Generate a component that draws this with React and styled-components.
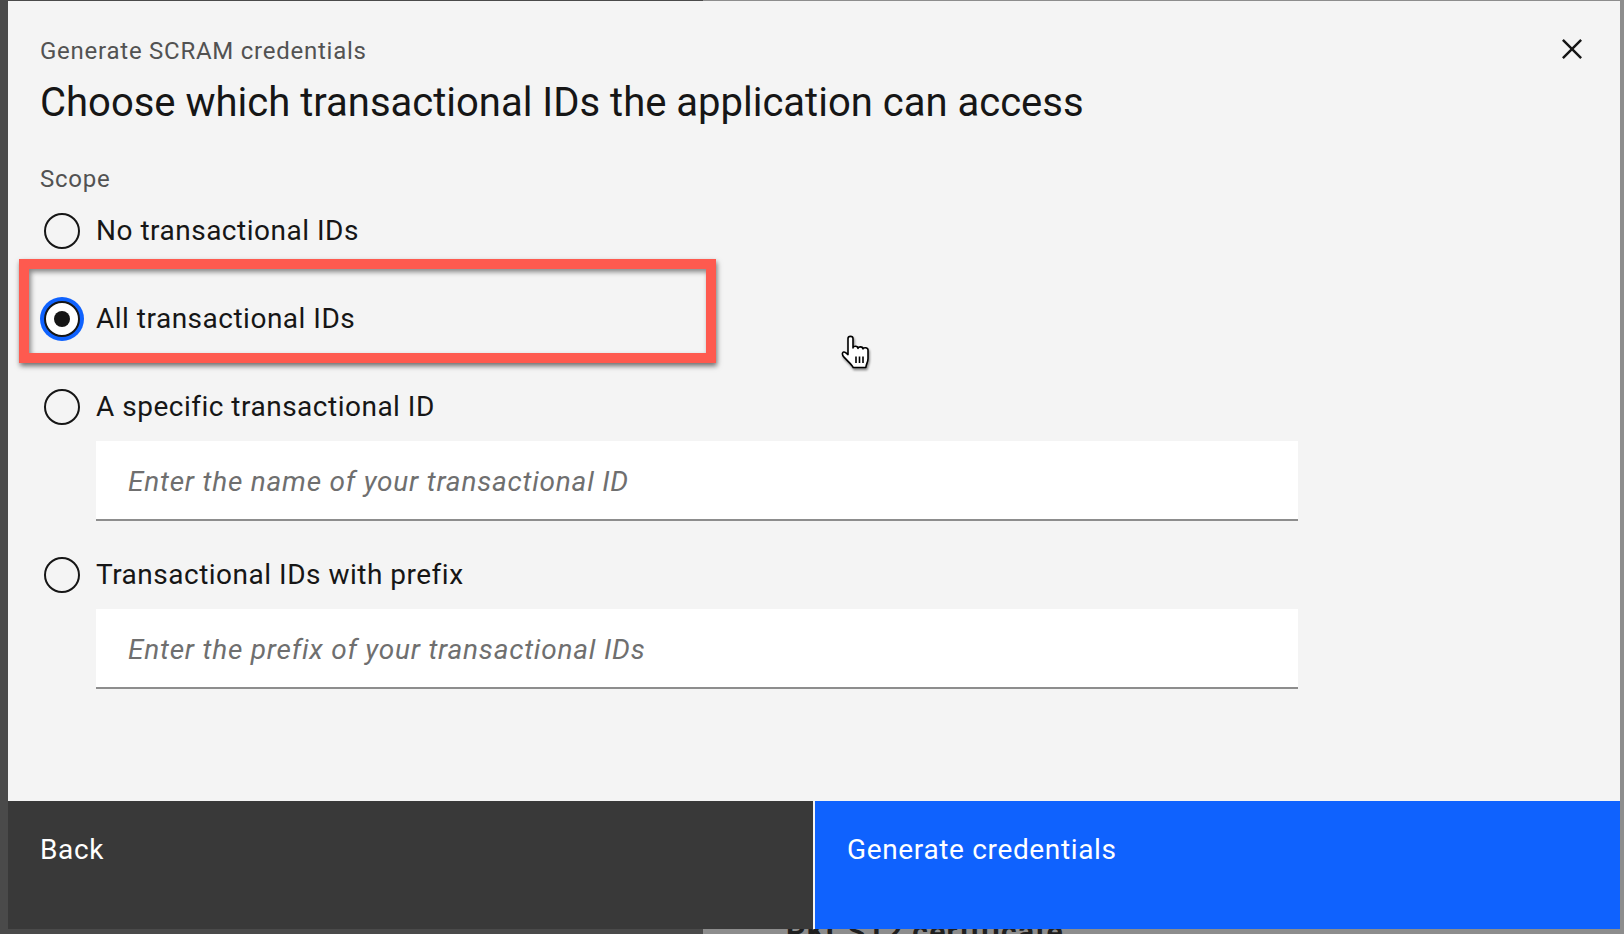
import React from "react";
import styled, { createGlobalStyle } from "styled-components";

const GlobalStyle = createGlobalStyle`
  html, body {
    margin: 0;
    padding: 0;
  }
  body {
    font-family: Roboto, "Liberation Sans", sans-serif;
  }
  * {
    box-sizing: border-box;
  }
`;

const Page = styled.div`
  position: relative;
  width: 1624px;
  height: 934px;
  overflow: hidden;
  display: flex;
  padding: 1px 4px 5px 8px;
  background: linear-gradient(to right, #4a4a4a 0 703px, #8d8d8d 703px);
`;

// bit of the page under the overlay that peeks out below the footer
const BehindText = styled.div`
  position: absolute;
  left: 786px;
  top: 917px;
  font-size: 30px;
  line-height: 30px;
  font-weight: 700;
  letter-spacing: 1.2px;
  color: #1f1f1f;
  white-space: nowrap;
`;

const Modal = styled.div`
  position: relative;
  z-index: 1;
  flex: 1;
  display: flex;
  flex-direction: column;
  background: #f4f4f4;
`;

const Header = styled.header`
  padding: 34px 32px 0;
`;

const Label = styled.p`
  margin: 0;
  font-size: 24px;
  line-height: 32px;
  letter-spacing: 0.75px;
  color: #525252;
`;

const Title = styled.h2`
  margin: 10px 0 0;
  font-size: 40px;
  line-height: 52px;
  font-weight: 400;
  letter-spacing: 0;
  color: #161616;
`;

const CloseButton = styled.button`
  position: absolute;
  top: 0;
  right: 0;
  width: 96px;
  height: 96px;
  padding: 0;
  border: 0;
  background: transparent;
  display: flex;
  align-items: center;
  justify-content: center;
  cursor: pointer;
  color: #161616;
`;

const Body = styled.div`
  flex: 1;
  margin-top: 34px;
  padding: 0 32px;
`;

const Options = styled.div`
  margin-top: 18px;
  display: flex;
  flex-direction: column;
  gap: 36px;
`;

const Option = styled.div`
  display: flex;
  flex-direction: column;
  gap: 16px;
  margin-bottom: ${(p) => (p.$plain ? "16px" : "0")};
`;

const RadioRow = styled.label`
  display: flex;
  align-items: center;
  gap: 16px;
  height: 36px;
  font-size: 28px;
  line-height: 36px;
  letter-spacing: 0.5px;
  color: #161616;
  cursor: pointer;
`;

const Circle = styled.span`
  flex: none;
  width: 36px;
  height: 36px;
  margin-left: 4px;
  border-radius: 50%;
  border: 2px solid #161616;
  display: flex;
  align-items: center;
  justify-content: center;
  background: ${(p) => (p.$checked ? "#ffffff" : "transparent")};
  box-shadow: ${(p) => (p.$checked ? "0 0 0 4px #0f62fe" : "none")};

  &::after {
    content: "";
    width: 16px;
    height: 16px;
    border-radius: 50%;
    background: #161616;
    display: ${(p) => (p.$checked ? "block" : "none")};
  }
`;

const TextInput = styled.input`
  margin-left: 56px;
  width: 1202px;
  height: 80px;
  padding: 2px 32px 0;
  border: 0;
  border-bottom: 2px solid #8d8d8d;
  background: #ffffff;
  outline: none;
  font-family: inherit;
  font-size: 28px;
  letter-spacing: 0.78px;
  color: #161616;

  &::placeholder {
    font-style: italic;
    color: #6f6f6f;
  }
`;

const Footer = styled.footer`
  display: grid;
  grid-template-columns: 1fr 1fr;
  gap: 2px;
  height: 128px;
`;

const FooterButton = styled.button`
  border: 0;
  margin: 0;
  padding: 31px 32px;
  text-align: left;
  display: flex;
  align-items: flex-start;
  font-family: inherit;
  font-size: 28px;
  line-height: 36px;
  letter-spacing: 0.65px;
  color: #ffffff;
  background: ${(p) => (p.$primary ? "#0f62fe" : "#393939")};
  cursor: pointer;
`;

// annotation drawn over the screenshot
const Highlight = styled.div`
  position: absolute;
  z-index: 2;
  left: 19px;
  top: 259px;
  width: 697px;
  height: 104px;
  border: 10px solid #fe5a4f;
  box-shadow: 1px 3px 5px rgba(0, 0, 0, 0.55),
    inset 2px 3px 5px rgba(0, 0, 0, 0.45);
  pointer-events: none;
`;

const Pointer = styled.svg`
  position: absolute;
  z-index: 3;
  left: 838px;
  top: 332px;
  filter: drop-shadow(1px 2px 1px rgba(0, 0, 0, 0.45));
  pointer-events: none;
`;

const options = [
  { id: "none", text: "No transactional IDs" },
  { id: "all", text: "All transactional IDs" },
  {
    id: "specific",
    text: "A specific transactional ID",
    placeholder: "Enter the name of your transactional ID",
  },
  {
    id: "prefix",
    text: "Transactional IDs with prefix",
    placeholder: "Enter the prefix of your transactional IDs",
  },
];

const CloseIcon = () => (
  <svg width="40" height="40" viewBox="0 0 32 32" fill="currentColor">
    <path d="M24 9.4L22.6 8 16 14.6 9.4 8 8 9.4 14.6 16 8 22.6 9.4 24 16 17.4 22.6 24 24 22.6 17.4 16 24 9.4z" />
  </svg>
);

const HandCursor = () => (
  <Pointer width="34" height="38" viewBox="0 0 34 38">
    <path
      d="M10 6.5C10 3.6 15 3.6 15 6.5L15 16C15 13.6 20 13.6 20 16.5C20 14.2 25 14.2 25 17C25 15.2 30 15.2 30 18L30 26.5C30 30 28.2 32 27.8 35.5L15.2 35.5C14 32.5 10 29.5 6.2 25.4C3 22.2 4.6 18.6 7.6 20.6L10 22.6Z"
      fill="#ffffff"
      stroke="#000000"
      strokeWidth="1.6"
      strokeLinejoin="round"
    />
    <path
      d="M18 24.5V31M21.5 24.5V31M25 24.5V31"
      stroke="#000000"
      strokeWidth="1.6"
    />
  </Pointer>
);

const App = () => {
  const selected = "all";

  return (
    <Page>
      <GlobalStyle />
      <BehindText>PKCS12 certificate</BehindText>

      <Modal>
        <Header>
          <Label>Generate SCRAM credentials</Label>
          <Title>Choose which transactional IDs the application can access</Title>
        </Header>
        <CloseButton aria-label="Close">
          <CloseIcon />
        </CloseButton>

        <Body role="radiogroup">
          <Label>Scope</Label>
          <Options>
            {options.map((o) => (
              <Option key={o.id} $plain={!o.placeholder}>
                <RadioRow>
                  <Circle $checked={o.id === selected} />
                  {o.text}
                </RadioRow>
                {o.placeholder && <TextInput placeholder={o.placeholder} />}
              </Option>
            ))}
          </Options>
        </Body>

        <Footer>
          <FooterButton>Back</FooterButton>
          <FooterButton $primary>Generate credentials</FooterButton>
        </Footer>
      </Modal>

      <Highlight />
      <HandCursor />
    </Page>
  );
};

export default App;
